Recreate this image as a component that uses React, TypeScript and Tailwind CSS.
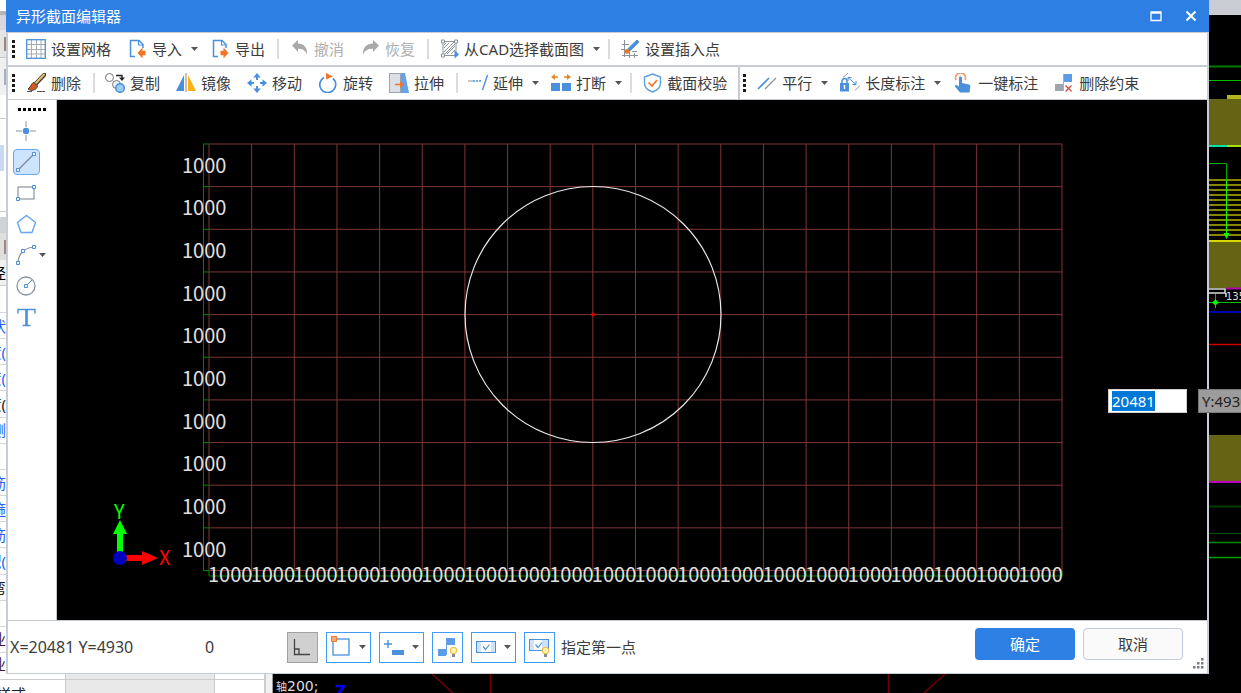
import { type ReactNode } from 'react';

const BLUE = '#4a90dc';
const ORANGE = '#f0762b';
const GRAY = '#8a949c';

const CELL = 42.65;
const COLS = 20;
const ROWS = 10;
const GRID_X = 152;
const GRID_Y = 44;
const GRID_RIGHT = GRID_X + COLS * CELL;
const GRID_BOTTOM = GRID_Y + ROWS * CELL;

const Icon = ({ children }: { children: ReactNode }) => (
    <svg className="h-5 w-5 shrink-0" viewBox="0 0 20 20" fill="none" aria-hidden="true">
        {children}
    </svg>
);

const Caret = () => (
    <svg className="h-1 w-[7px] shrink-0" viewBox="0 0 7 4" aria-hidden="true">
        <path d="M0 0h7L3.5 4z" fill="#555" />
    </svg>
);

// file toolbar icons
const GridIcon = () => (
    <Icon>
        <path d="M5.5 1v18M10.5 1v18M15 1v18M1 5.5h18M1 10.5h18M1 15h18" stroke="#a5abb0" />
        <rect x="0.7" y="0.7" width="18.6" height="18.6" stroke={BLUE} strokeWidth="1.3" />
    </Icon>
);

const ImportIcon = () => (
    <Icon>
        <path d="M8 17.5H3.5v-16h8.5l4 4V9" stroke={BLUE} strokeWidth="1.5" />
        <path d="M11.5 1.5v4.5H16" stroke={BLUE} strokeWidth="1.2" />
        <path d="M18.500 11.800h-3V8.500L10.500 14l5 5.500v-3.300h3z" fill={ORANGE} />
    </Icon>
);

const ExportIcon = () => (
    <Icon>
        <path d="M8 17.5H3.5v-16h8.5l4 4V9" stroke={BLUE} strokeWidth="1.5" />
        <path d="M11.5 1.5v4.5H16" stroke={BLUE} strokeWidth="1.2" />
        <path d="M10.500 11.800h3V8.500l5 5.500-5 5.500v-3.300h-3z" fill={ORANGE} />
    </Icon>
);

const UndoIcon = () => (
    <Icon>
        <path d="M3 6.5 9 1v3.5c6 0 9.5 4 9 11-1.5-4-4.5-6-9-5.7V13z" fill="#a9a9a9" />
    </Icon>
);

const RedoIcon = () => (
    <Icon>
        <path d="M19 6.5 13 1v3.5C6.500 4.500 2.500 8.500 3 15.500c1.500-4 5-6 10-5.700V13z" fill="#a9a9a9" />
    </Icon>
);

const HatchIcon = () => (
    <Icon>
        <path d="M5 13 15 3M5 9l5-5M8 15l8-8M5 16 16 5M12 15l4-4M5 6l2-2" stroke={GRAY} />
        <rect x="4" y="2.500" width="13" height="14" stroke={GRAY} />
        <path d="M2.500 1h3v3h-3zM15.500 1h3v3h-3zM2.500 15h3v3h-3z" fill="#fff" stroke={GRAY} />
        <path d="m15.500 11 4.500 4.500-4.500 4z" fill={BLUE} />
    </Icon>
);

const InsertPointIcon = () => (
    <Icon>
        <path d="M4.500 1v17M2 5.500h7M2 16.500h16M9.500 10v9M14.500 14v5M1 10.500h4M12 12.500h5" stroke={GRAY} />
        <path d="m17 1 2 2-8.500 8.500-3.500 1.500 1.500-4z" fill={BLUE} stroke={BLUE} />
        <circle cx="7" cy="12.500" r="2.400" fill={ORANGE} />
    </Icon>
);

// edit toolbar icons
const BrushIcon = () => (
    <Icon>
        <path d="m18.500 1.500-9 9.500" stroke="#4a3a28" strokeWidth="4" strokeLinecap="round" />
        <path d="m18 1.500-8 8.500" stroke="#e2bd80" strokeWidth="2" strokeLinecap="round" />
        <path d="M8 9.500c-3 .5-2.500 4-6 6.500 3 2.500 8.500 1.500 9.500-3z" fill="#d65a1e" stroke="#444" />
        <path d="M1 18.500h5M11 18.500h8" stroke="#555" />
    </Icon>
);

const CopyIcon = () => (
    <Icon>
        <circle cx="4.500" cy="4.500" r="4" stroke="#777" />
        <circle cx="11.500" cy="11.500" r="4" fill="#e8f3fc" stroke="#777" />
        <circle cx="15" cy="15" r="4.300" fill="#9ccdf2" stroke={BLUE} strokeWidth="1.500" />
        <path d="M11 2.500h6v3" stroke="#222" strokeWidth="1.400" />
        <path d="M14 4.500h6L17 8z" fill="#222" />
    </Icon>
);

const MirrorIcon = () => (
    <Icon>
        <path d="M8 2v16H0z" fill={BLUE} />
        <path d="M12 2v16h8z" fill="#fbb116" />
        <path d="M10 0v19" stroke="#999" strokeWidth="1.200" />
    </Icon>
);

const MoveIcon = () => (
    <Icon>
        <path d="M10 3v4M10 13v4M3 10h4M13 10h4" stroke={BLUE} strokeWidth="2" />
        <path d="m10 0 3.800 4.500H6.200zM10 20l3.800-4.500H6.200zM0 10l4.500-3.800v7.600zM20 10l-4.500-3.800v7.600z" fill={BLUE} />
    </Icon>
);

const RotateIcon = () => (
    <Icon>
        <path d="M6 4.500a8 8 0 1 0 9 1" stroke={BLUE} strokeWidth="1.700" />
        <path d="m8 0 7 3.500-7 3z" fill={ORANGE} />
    </Icon>
);

const StretchIcon = () => (
    <Icon>
        <rect x="0.500" y="0.500" width="11" height="19" fill="#dce0e6" stroke="#9aa3ae" />
        <path d="M12 0h4l4 20h-8z" fill="#65a2ee" />
        <path d="M6 11.500h6" stroke={ORANGE} strokeWidth="1.500" />
        <path d="m11 8 4 3.500-4 3.500z" fill={ORANGE} />
    </Icon>
);

const ExtendIcon = () => (
    <Icon>
        <path d="M0 8h5" stroke={GRAY} />
        <path d="M5 8h9" stroke={BLUE} strokeWidth="1.400" strokeDasharray="2 1" />
        <path d="m19.500 2-5 15" stroke={BLUE} strokeWidth="1.400" />
    </Icon>
);

const BreakIcon = () => (
    <Icon>
        <path d="M0 10h9v8H0zM11 10h9v8h-9z" fill={BLUE} />
        <path d="M2 4h5M13 4h5" stroke="#e08a1e" strokeWidth="1.500" />
        <path d="M4 1v6L0 4zM16 1v6l4-3z" fill="#e08a1e" />
    </Icon>
);

const ShieldIcon = () => (
    <Icon>
        <path d="M10.500 1 18.500 4v6c0 4.500-3.500 7.500-8 9-4.500-1.500-8-4.500-8-9V4z" stroke="#5c9fe4" strokeWidth="1.400" />
        <path d="m6.500 9.500 3.500 3.500 5-6" stroke={ORANGE} strokeWidth="1.600" />
    </Icon>
);

// constraint toolbar icons
const ParallelIcon = () => (
    <Icon>
        <path d="M1 16 12 5" stroke={BLUE} strokeWidth="1.700" />
        <path d="M8 16 19 5" stroke={GRAY} strokeWidth="1.300" />
    </Icon>
);

const LengthIcon = () => (
    <Icon>
        <path d="M0 10h9v8.500H0z" fill={BLUE} />
        <path d="M2 10V8a2.500 2.500 0 0 1 5 0v2" stroke={BLUE} strokeWidth="1.500" />
        <path d="M4.500 12v4" stroke="#fff" strokeWidth="1.500" />
        <path d="M3 4.500 8 0M15 17.500l5-5" stroke={GRAY} />
        <path d="m8 4.500 8 7M8 8V4.500h3.500M16 8v3.500h-3.500" stroke={BLUE} />
    </Icon>
);

const TouchIcon = () => (
    <Icon>
        <path d="M3 7a5 5 0 1 1 9 0" stroke="#f39a70" strokeWidth="1.700" />
        <path d="M6 4.500c0-1.500 3-1.500 3 0V10l7 1.500c1 .3 1.500 1 1.300 2L16.500 19.500H7L2 13.500c-.5-1.500 1.500-2 2.500-1L6 13.500z" fill={BLUE} />
    </Icon>
);

const RemoveConstraintIcon = () => (
    <Icon>
        <path d="M9 1h9v8H9z" fill="#5c9be8" />
        <path d="M1 11h8v7H1z" fill="#a0a6ae" />
        <path d="M9.500 1v17" stroke="#e8a34a" />
        <path d="m11.500 12.500 6 6M17.500 12.500l-6 6" stroke="#d64b3c" strokeWidth="1.300" />
    </Icon>
);

type ToolButtonProps = {
    label: string;
    icon: ReactNode;
    menu?: boolean;
    disabled?: boolean;
};

const ToolButton = ({ label, icon, menu, disabled }: ToolButtonProps) => (
    <button
        type="button"
        disabled={disabled}
        className="flex h-7 shrink-0 items-center gap-[5px] rounded pl-1 pr-[9px] text-[#3c3c3c] hover:bg-[#eef5fd] disabled:text-[#b0b0b0]"
    >
        {icon}
        <span>{label}</span>
        {menu && (
            <span className="-mr-1 pl-1">
                <Caret />
            </span>
        )}
    </button>
);

const Grip = () => (
    <div className="mr-1 flex shrink-0 flex-col gap-0.5">
        {[0, 1, 2, 3].map((i) => (
            <span key={i} className="h-[3px] w-[3px] bg-[#1a1a1a]" />
        ))}
    </div>
);

const Separator = () => <span className="mr-[3px] h-5 w-0.5 shrink-0 bg-[#dadcdf]" />;

const drawTools = [
    {
        label: '点',
        icon: (
            <>
                <path d="M10 0v6M10 14v6M0 10h6M14 10h6" stroke={GRAY} />
                <circle cx="10" cy="10" r="3.200" fill={BLUE} />
            </>
        ),
    },
    {
        label: '直线',
        selected: true,
        icon: (
            <>
                <path d="M2 18 18 2" stroke="#7d8890" strokeWidth="1.300" />
                <path d="M.5 16.500h3v3h-3zM16.500.5h3v3h-3z" fill="#fff" stroke={BLUE} />
            </>
        ),
    },
    {
        label: '矩形',
        icon: (
            <>
                <rect x="2" y="4" width="16" height="12" stroke={GRAY} strokeWidth="1.200" />
                <path d="M.5 14.500h3v3h-3zM16.500 2.500h3v3h-3z" fill="#fff" stroke={BLUE} />
            </>
        ),
    },
    {
        label: '多边形',
        icon: <path d="m10.500 1.500 9 7-3.500 10H5l-3.500-10z" stroke="#6aa5e8" strokeWidth="1.400" />,
    },
    {
        label: '圆弧',
        menu: true,
        icon: (
            <>
                <path d="M2 18C2 9 8 3 18 2" stroke={GRAY} strokeWidth="1.200" />
                <path d="M.5 16.500h3v3h-3zM16.500.5h3v3h-3zM5.500 4.500h3v3h-3z" fill="#fff" stroke={BLUE} />
            </>
        ),
    },
    {
        label: '圆',
        icon: (
            <>
                <circle cx="10" cy="10" r="9" stroke={GRAY} strokeWidth="1.300" />
                <path d="m10 10 6-6" stroke={BLUE} />
                <path d="M8.500 8.500h3v3h-3z" fill="#fff" stroke={BLUE} />
            </>
        ),
    },
    {
        label: '文字',
        icon: (
            <>
                <path d="M2 6.500V2.500h17v4M6.500 18.500h8" stroke={BLUE} strokeWidth="1.400" />
                <path d="M10.500 2.500v16" stroke={BLUE} strokeWidth="2.600" />
            </>
        ),
    },
];

const DrawToolbar = () => (
    <div className="flex w-[49px] shrink-0 flex-col gap-[5px] border-r border-[#c4c9d0] bg-white pl-[5px] pt-2">
        <div className="mb-0.5 ml-[5px] flex gap-0.5">
            {[0, 1, 2, 3, 4, 5].map((i) => (
                <span key={i} className="h-[3px] w-[3px] bg-black" />
            ))}
        </div>
        {drawTools.map((tool) => (
            <button
                key={tool.label}
                type="button"
                aria-label={tool.label}
                className={
                    tool.selected
                        ? 'flex h-[26px] w-[27px] items-center rounded border border-[#69a8f0] bg-[#cce4ff] pl-0.5'
                        : 'flex h-[26px] w-9 items-center gap-[3px] rounded border border-transparent pl-0.5'
                }
            >
                <Icon>{tool.icon}</Icon>
                {tool.menu && <Caret />}
            </button>
        ))}
    </div>
);

const SectionCanvas = () => {
    const cols = Array.from({ length: COLS + 1 }, (_, i) => GRID_X + i * CELL);
    const rows = Array.from({ length: ROWS + 1 }, (_, i) => GRID_Y + i * CELL);

    return (
        <svg className="h-full min-w-0 flex-1 bg-black font-['Noto_Sans_CJK_SC',sans-serif] text-[20px]" role="img" aria-label="截面">
            <g stroke="#803439">
                {cols.map((x) => (
                    <line key={x} x1={x} x2={x} y1={GRID_Y} y2={GRID_BOTTOM} />
                ))}
                {rows.map((y) => (
                    <line key={y} x1={GRID_X} x2={GRID_RIGHT} y1={y} y2={y} />
                ))}
            </g>

            {/* dimension rulers */}
            <g stroke="#008000">
                <line x1={146.5} x2={146.5} y1={GRID_Y} y2={GRID_BOTTOM} />
                <line x1={GRID_X} x2={GRID_RIGHT} y1={476} y2={476} />
                {rows.map((y) => (
                    <line key={y} x1={146} x2={GRID_X} y1={y} y2={y} />
                ))}
                {cols.map((x) => (
                    <line key={x} x1={x} x2={x} y1={GRID_BOTTOM} y2={476} />
                ))}
            </g>
            <g fill="#e0e0e0">
                {rows.slice(1).map((y) => (
                    <text key={y} x={125} y={y - 14}>1000</text>
                ))}
                {cols.slice(1).map((x) => (
                    <text key={x} x={x - CELL - 1} y={482}>1000</text>
                ))}
            </g>

            <circle cx={536} cy={214.5} r={128} fill="none" stroke="#e8e8e8" strokeWidth={1.2} />
            <circle cx={536} cy={214.5} r={2} fill="#e00000" />

            {/* coordinate axes */}
            <path d="M60 454V434h-4l7-14 7 14h-4v20z" fill="#00ff00" />
            <path d="M67 455h18v-4l16 7-16 7v-4H67z" fill="#ff0000" />
            <circle cx={63} cy={458} r={7} fill="#0000c0" />
            <text x={57} y={419} fill="#00ff00">Y</text>
            <text x={102} y={465} fill="#ff0000">X</text>
        </svg>
    );
};

type StatusButtonProps = {
    label: string;
    children: ReactNode;
    menu?: boolean;
    pressed?: boolean;
};

const StatusButton = ({ label, children, menu, pressed }: StatusButtonProps) => (
    <button
        type="button"
        aria-label={label}
        aria-pressed={pressed}
        className={
            pressed
                ? 'flex h-[31px] items-center border border-[#a0a0a0] bg-[#d0d0d0] px-1'
                : 'flex h-[31px] items-center gap-[7px] border border-[#3f9bf5] bg-white px-1'
        }
    >
        <svg className="h-[23px] w-[21px] shrink-0" viewBox="0 0 21 23" fill="none" aria-hidden="true">
            {children}
        </svg>
        {menu && <Caret />}
    </button>
);

const Bulb = () => (
    <>
        <circle cx="16.500" cy="14.500" r="3.300" fill="#fff3a8" stroke="#e8b93c" />
        <path d="M15 18h3v3h-3z" fill="#8a8a8a" />
    </>
);

const StatusBar = () => (
    <div className="flex h-[53px] shrink-0 items-center border-t border-[#c4c9d0] bg-white pl-0.5 text-[#3c3c3c]">
        <output className="w-[195px] shrink-0 text-base leading-5">X=20481 Y=4930</output>
        <output className="w-[82px] shrink-0 text-base leading-5">0</output>
        <div className="flex shrink-0 items-center gap-2">
            <StatusButton label="正交" pressed>
                <path d="M2.500 3v15.500H18M2.500 13h4.500v5" stroke="#444" strokeWidth="1.300" />
            </StatusButton>
            <StatusButton label="对象捕捉" menu>
                <rect x="2" y="3" width="16" height="16" stroke={BLUE} strokeWidth="1.300" />
                <path d="M.5.5h5v5h-5z" fill="#f5a878" stroke={ORANGE} />
            </StatusButton>
            <StatusButton label="动态输入" menu>
                <path d="M0 8h8M4 4v8" stroke={BLUE} strokeWidth="1.400" />
                <path d="M8 14h12v5H8z" fill={BLUE} />
            </StatusButton>
            <StatusButton label="约束显示">
                <path d="M9 2h9v7H9zM1 13h8v7H1z" fill="#5c9be8" />
                <path d="M9.500 3v16" stroke="#6aa5e8" />
                <Bulb />
            </StatusButton>
            <StatusButton label="校验" menu>
                <rect x="0.500" y="5.500" width="19" height="11" fill="#cfe2f8" stroke={BLUE} />
                <path d="M5 6h10v10H5z" fill="#fff" />
                <path d="m7 10.500 2.500 3 4-5" stroke={BLUE} strokeWidth="1.200" />
            </StatusButton>
            <StatusButton label="校验提示">
                <rect x="0.500" y="3.500" width="19" height="11" fill="#cfe2f8" stroke={BLUE} />
                <path d="M5 4h8v10H5z" fill="#fff" />
                <path d="m6.500 8.500 2.500 3 4-5" stroke={BLUE} strokeWidth="1.200" />
                <Bulb />
            </StatusButton>
        </div>
        <span className="ml-1.5 shrink-0">指定第一点</span>
        <div className="mb-1.5 ml-auto flex gap-2">
            <button type="button" className="h-8 w-[100px] rounded bg-[#2d7fe3] text-white">
                确定
            </button>
            <button type="button" className="h-8 w-[100px] rounded border border-[#c3cadb] bg-[#fafafa]">
                取消
            </button>
        </div>
        <svg className="mb-1 ml-2.5 mr-[3px] h-[11px] w-[11px] shrink-0 self-end" viewBox="0 0 11 11" fill="#777e85" aria-hidden="true">
            <path d="M8 0h2.500v2.500H8zM4 4h2.500v2.500H4zM8 4h2.500v2.500H8zM0 8h2.500v2.500H0zM4 8h2.500v2.500H4zM8 8h2.500v2.500H8z" />
        </svg>
    </div>
);

const EditorDialog = () => (
    <section className="flex min-w-0 flex-1 flex-col" aria-label="异形截面编辑器">
        <header className="flex h-8 shrink-0 items-center bg-[#2d7fe3] pl-2.5 pr-2 text-white">
            <h1>异形截面编辑器</h1>
            <button type="button" aria-label="最大化" className="ml-auto p-1">
                <svg className="h-3 w-3" viewBox="0 0 12 12" fill="none">
                    <path d="M1 2h10v8.500H1zM1 3h10" stroke="#fff" strokeWidth="1.300" />
                </svg>
            </button>
            <button type="button" aria-label="关闭" className="ml-[15px] p-1">
                <svg className="h-3 w-3" viewBox="0 0 12 12" fill="none">
                    <path d="m1.500 1.500 9 9M10.500 1.500l-9 9" stroke="#fff" strokeWidth="2" />
                </svg>
            </button>
        </header>

        <div className="flex min-h-0 flex-1 flex-col border-x-2 border-b border-[#c6ccd9] bg-white">
            <div className="flex h-[35px] shrink-0 items-center gap-[3px] border-b-2 border-t border-[#c8ccd2] pl-1">
                <Grip />
                <ToolButton label="设置网格" icon={<GridIcon />} />
                <ToolButton label="导入" icon={<ImportIcon />} menu />
                <ToolButton label="导出" icon={<ExportIcon />} />
                <Separator />
                <ToolButton label="撤消" icon={<UndoIcon />} disabled />
                <ToolButton label="恢复" icon={<RedoIcon />} disabled />
                <Separator />
                <ToolButton label="从CAD选择截面图" icon={<HatchIcon />} menu />
                <Separator />
                <ToolButton label="设置插入点" icon={<InsertPointIcon />} />
            </div>

            <div className="flex h-[33px] shrink-0 border-b border-[#c8ccd2]">
                <div className="flex items-center gap-[3px] border-r-2 border-[#c8ccd2] pl-1 pr-0.5">
                    <Grip />
                    <ToolButton label="删除" icon={<BrushIcon />} />
                    <Separator />
                    <ToolButton label="复制" icon={<CopyIcon />} />
                    <ToolButton label="镜像" icon={<MirrorIcon />} />
                    <ToolButton label="移动" icon={<MoveIcon />} />
                    <ToolButton label="旋转" icon={<RotateIcon />} />
                    <ToolButton label="拉伸" icon={<StretchIcon />} />
                    <Separator />
                    <ToolButton label="延伸" icon={<ExtendIcon />} menu />
                    <ToolButton label="打断" icon={<BreakIcon />} menu />
                    <Separator />
                    <ToolButton label="截面校验" icon={<ShieldIcon />} />
                </div>
                <div className="flex items-center gap-[3px] pl-[3px]">
                    <Grip />
                    <ToolButton label="平行" icon={<ParallelIcon />} menu />
                    <ToolButton label="长度标注" icon={<LengthIcon />} menu />
                    <ToolButton label="一键标注" icon={<TouchIcon />} />
                    <ToolButton label="删除约束" icon={<RemoveConstraintIcon />} />
                </div>
            </div>

            <div className="flex min-h-0 flex-1">
                <DrawToolbar />
                <SectionCanvas />
            </div>
            <StatusBar />
        </div>
    </section>
);

// the property table of the main window, mostly covered by the dialog
const propertyRows = [
    { text: '状', color: 'text-[#2962e8]' },
    { text: '度(', color: 'text-[#2962e8]' },
    { text: '度(', color: 'text-[#2962e8]' },
    { text: '度(', color: 'text-[#222]' },
    { text: '侧', color: 'text-[#2962e8]' },
    { text: '', color: '' },
    { text: '筋', color: 'text-[#2962e8]' },
    { text: '箍', color: 'text-[#2962e8]' },
    { text: '筋', color: 'text-[#2962e8]' },
    { text: '积(', color: 'text-[#2962e8]' },
    { text: '弯', color: 'text-[#222]' },
    { text: '', color: '' },
    { text: '业', color: 'text-[#3a1a40]' },
];

const PropertyStrip = () => (
    <aside className="flex w-1.5 shrink-0 flex-col overflow-hidden whitespace-nowrap bg-white">
        <div className="h-[15px] shrink-0 border-b-4 border-[#b4b6ba] bg-white" />
        <div className="h-[15px] shrink-0 bg-[#d6d7db]" />
        <div className="flex h-7 shrink-0 items-center justify-end border-b border-[#c8c8c8] bg-[#e6e5e5]">
            <span className="h-3.5 w-0.5 bg-[#a08878]" />
        </div>
        <div className="flex h-[37px] shrink-0 items-center justify-end bg-[#f0f0f0]">
            <span className="h-4 w-0.5 bg-[#a8b0ba]" />
        </div>
        <div className="h-6 shrink-0 border-b border-[#ccc]" />
        <div className="h-[26px] shrink-0" />
        <div className="h-[26px] w-1 shrink-0 bg-[#c9d9f2]" />
        <div className="h-[41px] shrink-0 border-b border-[#ccc]" />
        <div className="h-[5px] shrink-0" />
        <div className="h-4 shrink-0 bg-[#d0d2d6]" />
        <div className="flex h-[27px] shrink-0 items-center justify-end bg-[#dedede]">
            <span className="h-3.5 w-0.5 bg-[#a08878]" />
        </div>
        <div className="flex h-[26px] shrink-0 items-center justify-end border-b border-[#ccc] bg-[#f0f0f0]">径</div>
        <div className="h-[27px] shrink-0 border-b border-[#d6d6d6]" />
        {propertyRows.map((row, i) => (
            <div key={i} className="flex min-h-0 flex-1 items-center justify-end border-b border-[#d6d6d6]">
                <span className={row.color}>{row.text}</span>
            </div>
        ))}
        <div className="flex h-[21px] shrink-0 items-center justify-end text-[#3a1a40]">业</div>
    </aside>
);

const stripeYs = [180, 185, 190, 195, 200, 205, 210, 215, 220, 225, 230, 235];

// plan drawing showing at the right of the dialog
const DrawingStrip = () => (
    <svg className="h-full w-8 shrink-0 bg-black" fill="none" aria-hidden="true">
        <path d="M0 0h32v15H0z" fill="#c9ccd2" />
        <path d="M0 66.500h32" stroke="#007c00" strokeWidth="2" />
        <path d="M0 80.500h32" stroke="#00c000" />
        <path d="M18 97h14" stroke="#b4b41e" strokeWidth="4" />
        <path d="M0 99h32v46H0zM0 242h32v46H0zM0 435h32v46H0z" fill="#646414" />
        <path d="M0 146h18" stroke="#00e0a0" strokeWidth="2" />
        <path d="M18 146h14" stroke="#a8e000" strokeWidth="2" />
        {stripeYs.map((y) => (
            <line key={y} x1={0} x2={32} y1={y} y2={y} stroke="#868600" strokeWidth={2} />
        ))}
        <path d="M0 241h32" stroke="#d8d800" strokeWidth="2" />
        <path d="M0 163.500h17.500V233" stroke="#00a800" />
        <path d="M17.500 180v55" stroke="#00ff00" />
        <path d="M14.500 233h6l-3 6z" fill="#00ff00" />
        <path d="M17 288.500h15" stroke="#b000b0" strokeWidth="2" />
        <path d="M0 289h16v4H0M17 293v4" stroke="#ddd" strokeWidth="1.500" />
        <text x="17" y="300" fill="#ddd" className="font-['DejaVu_Sans',sans-serif] text-[10px]">135</text>
        <path d="M0 302.500h32M6.500 294v14" stroke="#00c000" />
        <path d="m3 302.500 3.500-3 3.500 3-3.500 3z" fill="#00ff00" />
        <path d="M0 312h32" stroke="#0000b0" strokeWidth="2" />
        <path d="M0 344.500h32" stroke="#d00000" strokeWidth="1.500" />
        <path d="M0 482h32" stroke="#c000c0" strokeWidth="2" />
        <path d="M0 506.500h32" stroke="#003c00" strokeWidth="2" />
        <path d="M0 533.500h32" stroke="#005000" />
        <path d="M0 542.500h32" stroke="#008c00" strokeWidth="1.500" />
        <path d="M0 557.500h32" stroke="#00a000" strokeWidth="1.500" />
    </svg>
);

const BottomStrip = () => (
    <div className="flex h-[19px] shrink-0 overflow-hidden bg-white">
        <div className="w-[66px] border-r border-[#ccc]">
            <div className="h-1.5 border-b border-[#ccc]" />
            <div className="flex w-[26px] justify-end overflow-hidden whitespace-nowrap pt-1 text-[#222]">样式</div>
        </div>
        <div className="w-[149px] border-r border-[#ccc] bg-[#e9e9e9]">
            <div className="h-1.5 border-b border-[#ccc]" />
        </div>
        <div className="w-[51px] border-r-2 border-[#ccc]">
            <div className="h-1.5 border-b border-[#ccc]" />
        </div>
        <div className="w-[7px] border-r border-[#999] bg-[#f0f0f0]" />
        <svg className="h-full flex-1 bg-black font-['DejaVu_Sans','Noto_Sans_CJK_SC',sans-serif]" aria-hidden="true">
            <text x="3" y="17" fill="#ddd" className="text-[11px]">轴</text>
            <text x="14" y="17" fill="#ddd" className="text-[14px]">200;</text>
            <text x="62" y="23" fill="#0000f0" className="text-[16px] font-bold">Z</text>
            <path d="m159 0 21 19M217.500 0v19M615.500 0v19M672 0l-21 19" stroke="#700000" strokeWidth="1.500" />
        </svg>
    </div>
);

export default function App() {
    return (
        <main className="relative flex h-screen flex-col overflow-hidden bg-black font-['Noto_Sans','Noto_Sans_CJK_SC',sans-serif] text-[15px] leading-5">
            <div className="flex min-h-0 flex-1">
                <PropertyStrip />
                <EditorDialog />
                <DrawingStrip />
            </div>
            <BottomStrip />

            <div className="absolute -right-2 top-[389px] flex gap-[11px]">
                <input
                    aria-label="X"
                    defaultValue="20481"
                    autoFocus
                    onFocus={(e) => e.target.select()}
                    className="h-6 w-[79px] border border-[#d0d0d0] bg-white px-[3px] outline-none selection:bg-[#0078d7] selection:text-white"
                />
                <span className="flex h-6 w-[51px] items-center border border-[#777] bg-[#9c9c9c] pl-[3px] text-[#222]">
                    Y:4930
                </span>
            </div>
        </main>
    );
}
